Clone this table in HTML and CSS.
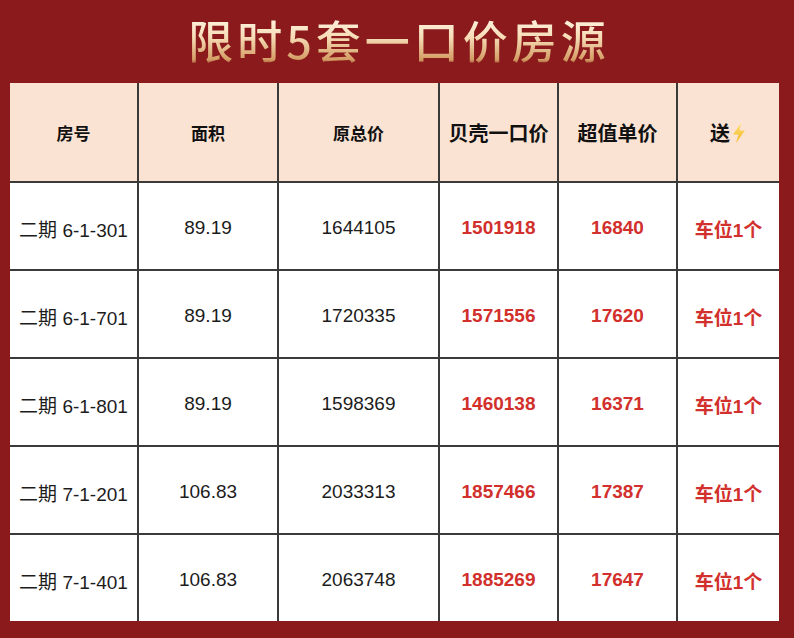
FILE: index.html
```html
<!DOCTYPE html>
<html lang="zh">
<head>
<meta charset="utf-8">
<link rel="stylesheet" href="styles.css">
</head>
<body>
<div class="page">
  <h1 class="title">限时5套一口价房源</h1>
  <table class="grid">
    <colgroup>
      <col class="c1"><col class="c2"><col class="c3"><col class="c4"><col class="c5"><col class="c6">
    </colgroup>
    <thead>
      <tr>
        <th>房号</th><th>面积</th><th>原总价</th>
        <th class="big">贝壳一口价</th><th class="big">超值单价</th>
        <th class="big">送<svg class="bolt" viewBox="0 0 16 22" width="16" height="22"><defs><linearGradient id="g" x1="0" y1="0" x2="0" y2="1"><stop offset="0" stop-color="#ffe27a"/><stop offset="1" stop-color="#f2b61e"/></linearGradient></defs><path d="M10 1 L2 12.5 L7.5 12.5 L5 21 L14 8.5 L8.5 8.5 Z" fill="url(#g)"/></svg></th>
      </tr>
    </thead>
    <tbody>
      <tr><td>二期 6-1-301</td><td>89.19</td><td>1644105</td><td class="red">1501918</td><td class="red">16840</td><td class="red">车位1个</td></tr>
      <tr><td>二期 6-1-701</td><td>89.19</td><td>1720335</td><td class="red">1571556</td><td class="red">17620</td><td class="red">车位1个</td></tr>
      <tr><td>二期 6-1-801</td><td>89.19</td><td>1598369</td><td class="red">1460138</td><td class="red">16371</td><td class="red">车位1个</td></tr>
      <tr><td>二期 7-1-201</td><td>106.83</td><td>2033313</td><td class="red">1857466</td><td class="red">17387</td><td class="red">车位1个</td></tr>
      <tr><td>二期 7-1-401</td><td>106.83</td><td>2063748</td><td class="red">1885269</td><td class="red">17647</td><td class="red">车位1个</td></tr>
    </tbody>
  </table>
</div>
</body>
</html>
```
FILE: styles.css
```css
html, body {
  margin: 0;
  padding: 0;
  background: #8a1a1c;
}
.page {
  width: 794px;
  height: 638px;
  background: #8a1a1c;
  font-family: "Noto Sans CJK SC", "Noto Sans", sans-serif;
  overflow: hidden;
}
.title {
  margin: 0;
  height: 79px;
  padding-bottom: 4px;
  display: flex;
  align-items: center;
  justify-content: center;
  font-size: 45px;
  font-weight: 500;
  letter-spacing: 4px;
  text-indent: 4px;
  line-height: 1;
  color: #f3d3a8;
  background: linear-gradient(180deg, rgba(0,0,0,0) 14%, #fff3e0 22%, #f6dcb6 45%, #d49c64 72%, rgba(0,0,0,0) 80%);
  -webkit-background-clip: text;
  background-clip: text;
  -webkit-text-fill-color: transparent;
}
.grid {
  margin-left: 10px;
  width: 769px;
  border-collapse: collapse;
  border-style: hidden;
  table-layout: fixed;
  background: #fff;
}
.c1 { width: 128px; }
.c2 { width: 140px; }
.c3 { width: 161px; }
.c4 { width: 119px; }
.c5 { width: 119px; }
.c6 { width: 102px; }
.grid th, .grid td {
  border: 2px solid #3a3a3a;
  text-align: center;
  padding: 0;
  white-space: nowrap;
}
.grid th {
  height: 98px;
  background: #fbe3d3;
  font-size: 17px;
  font-weight: 700;
  color: #111;
}
.grid th.big {
  font-size: 20px;
}
.grid td {
  height: 82px;
  padding-top: 4px;
  font-family: "Liberation Sans", "Noto Sans CJK SC", sans-serif;
  font-size: 19px;
  color: #1c1c1c;
}
.grid td.red {
  color: #d2302c;
  font-weight: 700;
}
.bolt {
  vertical-align: -3px;
  margin-left: 1px;
}
```
